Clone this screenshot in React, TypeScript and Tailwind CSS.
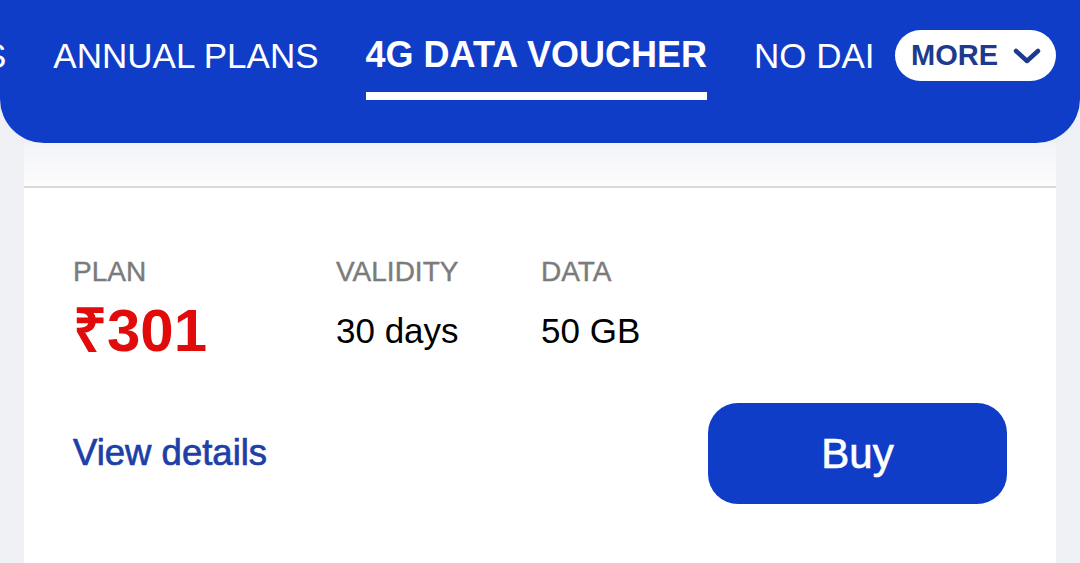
import React from "react";

export default function App() {
  return (
    <div className="w-[1080px] h-[563px] bg-[#eef0f4] overflow-hidden flex flex-col font-['Liberation_Sans',Arial,sans-serif]">
      {/* Header */}
      <div className="relative h-[143px] shrink-0 bg-[#0f3dc7] rounded-b-[44px] overflow-hidden z-10">
        <div className="flex items-start gap-[47px] pt-[38px] ml-[-17px] whitespace-nowrap text-white text-[35px] leading-none">
          <div className="font-light">S</div>
          <div className="font-light">ANNUAL PLANS</div>
          <div className="flex flex-col">
            <span className="font-bold text-[36px] mt-[-1px]">4G DATA VOUCHER</span>
            <span className="mt-[19px] h-[8px] w-full bg-white" />
          </div>
          <div className="font-light">NO DAI</div>
        </div>
        <div className="absolute right-0 top-0 h-[100px] pl-[20px] pr-[24px] pt-[30px] bg-[#0f3dc7]">
          <div className="flex items-center h-[51px] w-[161px] rounded-full bg-white pl-[16px] gap-[15px]">
            <span className="text-[29px] leading-none font-bold text-[#1c3a8e]">MORE</span>
            <svg width="28" height="16" viewBox="0 0 28 16" fill="none">
              <path d="M3 3 L14 13 L25 3" stroke="#1c3a8e" strokeWidth="4.5" strokeLinecap="round" strokeLinejoin="round" />
            </svg>
          </div>
        </div>
      </div>

      {/* Card */}
      <div className="mx-[24px] flex-1 bg-white flex flex-col">
        <div className="h-[45px] shrink-0 bg-gradient-to-b from-[#f3f4f8] to-[#fcfcfd] border-b-2 border-[#d9d9db]" />
        <div className="flex pl-[49px] pt-[70px]">
          <div className="w-[263px] flex flex-col">
            <span className="text-[28px] leading-none text-[#7b7b7b] [-webkit-text-stroke:0.4px_#7b7b7b]">PLAN</span>
            <span className="mt-[15px] text-[60px] leading-none font-bold text-[#e10b0b]">₹301</span>
          </div>
          <div className="w-[205px] flex flex-col">
            <span className="text-[28px] leading-none text-[#7b7b7b] [-webkit-text-stroke:0.4px_#7b7b7b]">VALIDITY</span>
            <span className="mt-[27px] text-[35px] leading-none text-black">30 days</span>
          </div>
          <div className="flex flex-col">
            <span className="text-[28px] leading-none text-[#7b7b7b] [-webkit-text-stroke:0.4px_#7b7b7b]">DATA</span>
            <span className="mt-[27px] text-[35px] leading-none text-black">50 GB</span>
          </div>
        </div>
        <div className="flex items-center justify-between pl-[49px] pr-[49px] mt-[42px]">
          <span className="text-[36.5px] leading-none font-medium text-[#1d3fa8] [-webkit-text-stroke:0.7px_#1d3fa8]">View details</span>
          <button className="w-[299px] h-[101px] rounded-[30px] bg-[#0f3dc7] text-white text-[42px] leading-none font-medium flex items-center justify-center [-webkit-text-stroke:0.7px_#ffffff]">
            Buy
          </button>
        </div>
      </div>
    </div>
  );
}
